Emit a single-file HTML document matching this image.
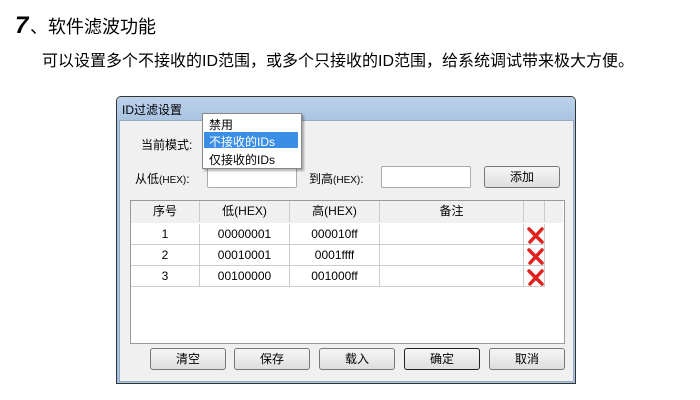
<!DOCTYPE html>
<html><head><meta charset="utf-8"><style>
body{margin:0;width:700px;height:400px;background:#fff;position:relative;overflow:hidden;font-family:"Liberation Sans","Noto Sans CJK SC",sans-serif;}
.a{position:absolute}
.dlg{left:116px;top:96px;width:458px;height:286px;border:1px solid #333;background:#9fc3e6;border-radius:5px 5px 0 0}
.tb{left:117px;top:97px;width:458px;height:23px;background:linear-gradient(#bcd2ea,#a9c4e2);border-radius:4px 4px 0 0}
.body{left:119px;top:120px;width:453px;height:260px;background:#f0f0f0;border:1px solid #9ab}
.t12{font-size:12px;color:#000;white-space:nowrap}
.inp{background:#fff;border:1px solid #aaa;border-radius:2px}
.btn{border:1px solid #777;border-radius:3px;background:linear-gradient(#f6f6f6,#dedede);font-size:12px;text-align:center;line-height:20px;height:20px;width:74px}
.grid{left:130px;top:200px;width:433px;height:142px;background:#fff;border:1px solid #999}
.c{position:absolute;font-size:12px;text-align:center;height:21px;line-height:21px;border-right:1px solid #ccc;border-bottom:1px solid #ccc;box-sizing:border-box}
.x{position:absolute}
</style></head><body>
<div class="a" style="left:15px;top:12px;font-size:24px;font-style:italic;font-weight:bold">7</div>
<div class="a" style="left:30px;top:13px;font-size:18px">、软件滤波功能</div>
<div class="a" style="left:42px;top:47px;font-size:16px">可以设置多个不接收的ID范围，或多个只接收的ID范围，给系统调试带来极大方便。</div>
<div class="a dlg"></div>
<div class="a tb"></div>
<div class="a t12" style="left:122px;top:101px">ID过滤设置</div>
<div class="a body"></div>
<div class="a t12" style="left:141px;top:136px">当前模式:</div>
<div class="a t12" style="left:135px;top:170px">从低<span style="font-size:10px">(HEX)</span>:</div>
<div class="a inp" style="left:207px;top:166px;width:88px;height:20px"></div>
<div class="a t12" style="left:309px;top:170px">到高<span style="font-size:10px">(HEX)</span>:</div>
<div class="a inp" style="left:381px;top:166px;width:88px;height:20px"></div>
<div class="a btn" style="left:484px;top:166px">添加</div>
<div class="a" style="left:202px;top:113px;width:98px;height:54px;background:#fff;border:1px solid #888;box-shadow:2px 2px 2px rgba(0,0,0,.3)"></div>
<div class="a t12" style="left:209px;top:116px">禁用</div>
<div class="a" style="left:204px;top:132px;width:94px;height:16px;background:#3a8ee6"></div>
<div class="a t12" style="left:209px;top:133px;color:#fff">不接收的IDs</div>
<div class="a t12" style="left:209px;top:151px">仅接收的IDs</div>
<div class="a grid"></div>
<div class="a" style="left:131px;top:201px;width:432px;height:22px;background:#f0f0f0"></div>
<div class="c" style="left:131px;top:201px;width:69px;border-bottom:none">序号</div>
<div class="c" style="left:200px;top:201px;width:90px;border-bottom:none">低(HEX)</div>
<div class="c" style="left:290px;top:201px;width:90px;border-bottom:none">高(HEX)</div>
<div class="c" style="left:380px;top:201px;width:144px;border-bottom:none">备注</div>
<div class="c" style="left:524px;top:201px;width:21px;border-bottom:none"></div>
<div class="c" style="left:131px;top:224px;width:69px">1</div><div class="c" style="left:200px;top:224px;width:90px">00000001</div><div class="c" style="left:290px;top:224px;width:90px">000010ff</div><div class="c" style="left:380px;top:224px;width:144px"></div><div class="c" style="left:524px;top:224px;width:21px"></div>
<div class="c" style="left:131px;top:245px;width:69px">2</div><div class="c" style="left:200px;top:245px;width:90px">00010001</div><div class="c" style="left:290px;top:245px;width:90px">0001ffff</div><div class="c" style="left:380px;top:245px;width:144px"></div><div class="c" style="left:524px;top:245px;width:21px"></div>
<div class="c" style="left:131px;top:266px;width:69px">3</div><div class="c" style="left:200px;top:266px;width:90px">00100000</div><div class="c" style="left:290px;top:266px;width:90px">001000ff</div><div class="c" style="left:380px;top:266px;width:144px"></div><div class="c" style="left:524px;top:266px;width:21px"></div>
<svg class="x" style="left:527px;top:227px" width="17" height="17"><path d="M2 2 L15 15 M15 2 L3 15" stroke="#e2201c" stroke-width="3.5" stroke-linecap="round"/></svg>
<svg class="x" style="left:527px;top:248px" width="17" height="17"><path d="M2 2 L15 15 M15 2 L3 15" stroke="#e2201c" stroke-width="3.5" stroke-linecap="round"/></svg>
<svg class="x" style="left:527px;top:269px" width="17" height="17"><path d="M2 2 L15 15 M15 2 L3 15" stroke="#e2201c" stroke-width="3.5" stroke-linecap="round"/></svg>
<div class="a btn" style="left:150px;top:348px">清空</div>
<div class="a btn" style="left:234px;top:348px">保存</div>
<div class="a btn" style="left:319px;top:348px">载入</div>
<div class="a btn" style="left:404px;top:348px;border-color:#222">确定</div>
<div class="a btn" style="left:489px;top:348px">取消</div>
</body></html>
